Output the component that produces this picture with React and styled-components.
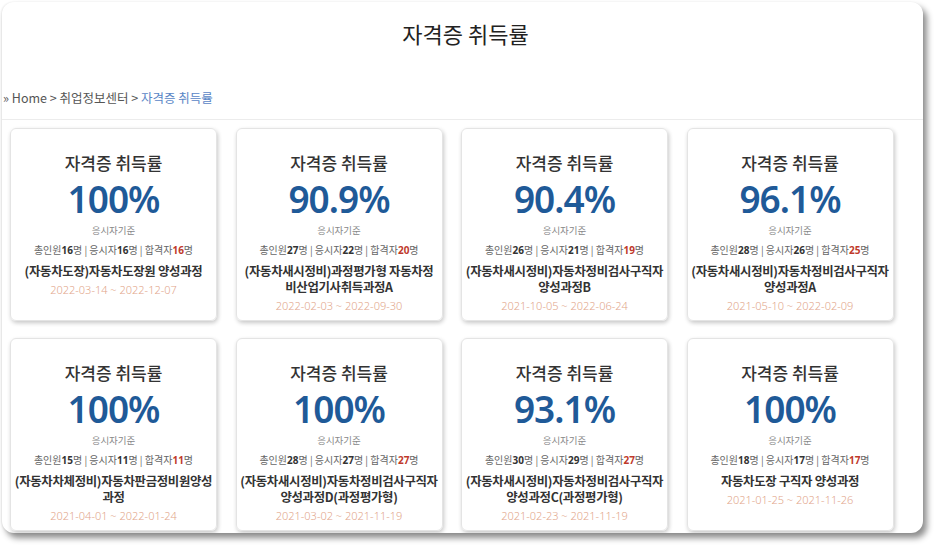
import React from "react";
import styled, { createGlobalStyle } from "styled-components";

const GlobalStyle = createGlobalStyle`
  html, body {
    margin: 0;
    padding: 0;
    background: #ffffff;
  }
  body {
    font-family: "Noto Sans", "Noto Sans CJK KR", sans-serif;
  }
`;

// 과정명은 원본 화면의 줄바꿈 그대로
const courses = [
  { rate: "100%", total: 16, taken: 16, passed: 16, name: ["(자동차도장)자동차도장원 양성과정"], period: "2022-03-14 ~ 2022-12-07" },
  { rate: "90.9%", total: 27, taken: 22, passed: 20, name: ["(자동차새시정비)과정평가형 자동차정", "비산업기사취득과정A"], period: "2022-02-03 ~ 2022-09-30" },
  { rate: "90.4%", total: 26, taken: 21, passed: 19, name: ["(자동차새시정비)자동차정비검사구직자", "양성과정B"], period: "2021-10-05 ~ 2022-06-24" },
  { rate: "96.1%", total: 28, taken: 26, passed: 25, name: ["(자동차새시정비)자동차정비검사구직자", "양성과정A"], period: "2021-05-10 ~ 2022-02-09" },
  { rate: "100%", total: 15, taken: 11, passed: 11, name: ["(자동차차체정비)자동차판금정비원양성", "과정"], period: "2021-04-01 ~ 2022-01-24" },
  { rate: "100%", total: 28, taken: 27, passed: 27, name: ["(자동차새시정비)자동차정비검사구직자", "양성과정D(과정평가형)"], period: "2021-03-02 ~ 2021-11-19" },
  { rate: "93.1%", total: 30, taken: 29, passed: 27, name: ["(자동차새시정비)자동차정비검사구직자", "양성과정C(과정평가형)"], period: "2021-02-23 ~ 2021-11-19" },
  { rate: "100%", total: 18, taken: 17, passed: 17, name: ["자동차도장 구직자 양성과정"], period: "2021-01-25 ~ 2021-11-26" },
];

export default function App() {
  return (
    <>
      <GlobalStyle />
      <Page>
        <Panel>
          <Header>
            <PageTitle>자격증 취득률</PageTitle>
            <Breadcrumb>
              » Home &gt; 취업정보센터 &gt; <Current>자격증 취득률</Current>
            </Breadcrumb>
          </Header>
          <CardGrid>
            {courses.map((c, i) => (
              <Card key={i}>
                <CardTitle>자격증 취득률</CardTitle>
                <Rate>{c.rate}</Rate>
                <Basis>응시자기준</Basis>
                <Stats>
                  총인원<Num>{c.total}</Num>명 | 응시자<Num>{c.taken}</Num>명 | 합격자<Num $pass>{c.passed}</Num>명
                </Stats>
                <CourseName>
                  {c.name.map((line, j) => (
                    <NameLine key={j}>{line}</NameLine>
                  ))}
                </CourseName>
                <Period>{c.period}</Period>
              </Card>
            ))}
          </CardGrid>
        </Panel>
      </Page>
    </>
  );
}

const Page = styled.div`
  width: 936px;
  height: 552px;
  padding: 2px 0 0 2px;
  box-sizing: border-box;
`;

const Panel = styled.div`
  width: 921px;
  height: 531px;
  background: #fff;
  border-radius: 12px;
  box-shadow: 4px 5px 6px rgba(0, 0, 0, 0.45), -1px 0 2px rgba(0, 0, 0, 0.08);
  overflow: hidden;
`;

const Header = styled.div`
  border-bottom: 1px solid #ececec;
  height: 117px;
  display: flex;
  flex-direction: column;
`;

const PageTitle = styled.h1`
  margin: 17px 0 0;
  padding-left: 6px;
  text-align: center;
  font-family: "Noto Sans CJK KR", sans-serif;
  font-size: 22px;
  line-height: 28px;
  font-weight: 400;
  color: #222;
`;

const Breadcrumb = styled.div`
  margin-top: 42px;
  padding-left: 1px;
  font-family: "Noto Sans CJK KR", sans-serif;
  font-size: 12.5px;
  line-height: 18px;
  color: #555;
`;

const Current = styled.span`
  color: #5a86c6;
`;

const CardGrid = styled.div`
  display: grid;
  grid-template-columns: repeat(4, 207px);
  column-gap: 18.5px;
  row-gap: 17px;
  padding: 8px 0 0 8px;
`;

const Card = styled.div`
  height: 193px;
  box-sizing: border-box;
  border: 1px solid #e4e4e4;
  border-radius: 6px;
  box-shadow: 1px 2px 4px rgba(0, 0, 0, 0.22);
  display: flex;
  flex-direction: column;
  align-items: center;
  text-align: center;
  padding: 23px 2px 0;
`;

const CardTitle = styled.div`
  font-family: "Noto Sans CJK KR", sans-serif;
  font-size: 17px;
  line-height: 22px;
  font-weight: 500;
  color: #333;
`;

const Rate = styled.div`
  margin-top: 3px;
  font-family: "Noto Sans", sans-serif;
  font-size: 37px;
  line-height: 44px;
  font-weight: 600;
  color: #1f5a98;
  letter-spacing: -1px;
`;

const Basis = styled.div`
  margin-top: 2px;
  font-family: "Noto Sans CJK KR", sans-serif;
  font-size: 9.5px;
  line-height: 14px;
  color: #888;
`;

const Stats = styled.div`
  margin-top: 6px;
  font-family: "Noto Sans CJK KR", sans-serif;
  font-size: 10px;
  line-height: 14px;
  color: #666;
  white-space: nowrap;
`;

const Num = styled.b`
  font-family: "Noto Sans", sans-serif;
  font-weight: 700;
  color: ${(p) => (p.$pass ? "#c0392b" : "#333")};
`;

const CourseName = styled.div`
  margin-top: 6px;
  font-family: "Noto Sans CJK KR", sans-serif;
  font-size: 12.4px;
  line-height: 16px;
  font-weight: 700;
  color: #333;
  letter-spacing: -0.3px;
`;

const NameLine = styled.div`
  white-space: nowrap;
`;

const Period = styled.div`
  margin-top: 3px;
  font-family: "Noto Sans", sans-serif;
  font-size: 11px;
  line-height: 16px;
  font-weight: 300;
  color: #e2a68b;
`;
